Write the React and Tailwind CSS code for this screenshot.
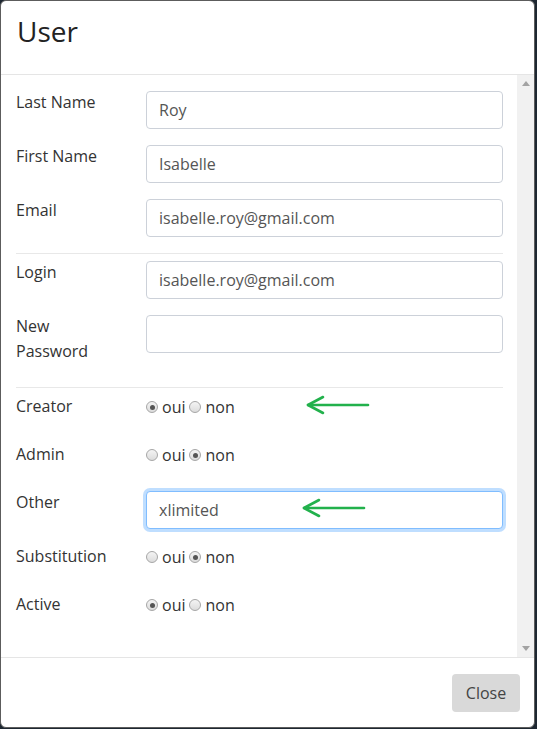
import React from "react";

function Radio({ checked }) {
  return (
    <span className="relative inline-flex w-[12px] h-[12px] rounded-full border border-[#a6a6a6] bg-gradient-to-b from-[#f4f4f4] to-[#dcdcdc] items-center justify-center">
      {checked && <span className="w-[5px] h-[5px] rounded-full bg-[#555]" />}
    </span>
  );
}

function RadioGroup({ value }) {
  return (
    <div className="h-[32px] flex items-start">
      <div className="h-[24px] flex items-center gap-[4px] text-[#333]">
        <span className="inline-flex items-center gap-[4px]">
          <Radio checked={value === "oui"} />
          <span>oui</span>
        </span>
        <span className="inline-flex items-center gap-[4px]">
          <Radio checked={value === "non"} />
          <span>non</span>
        </span>
      </div>
    </div>
  );
}

function Row({ label, children }) {
  return (
    <div className="grid grid-cols-[130px_1fr] mb-4">
      <div className="relative -top-[1px] leading-[25px] mb-[6px] text-[#333]">{label}</div>
      <div>{children}</div>
    </div>
  );
}

function Input({ value, focused }) {
  return (
    <div
      className={
        "h-[38px] rounded-[4px] border px-3 flex items-center text-[#555] bg-white " +
        (focused
          ? "border-[#80bdff] shadow-[0_0_0_3px_rgba(0,123,255,0.25)]"
          : "border-[#ccd1d9]")
      }
    >
      {value}
    </div>
  );
}

function Arrow({ className }) {
  return (
    <svg className={className} width="64" height="22" viewBox="0 0 64 22" fill="none">
      <path d="M2 10 H62" stroke="#22b14c" strokeWidth="2.6" strokeLinecap="round" />
      <path d="M17 2 L2 10 L17 18" stroke="#22b14c" strokeWidth="2.6" strokeLinecap="round" strokeLinejoin="round" />
    </svg>
  );
}

export default function App() {
  return (
    <div
      className="w-[537px] h-[729px] bg-[#1d2731] overflow-hidden text-[16px]"
      style={{ fontFamily: '"Open Sans", "Liberation Sans", sans-serif' }}
    >
      <div className="relative w-[535px] h-[728px] bg-white border border-[#5c5c5c] rounded-[6px] flex flex-col overflow-hidden">
        <div className="h-[74px] border-b border-[#e5e5e5] px-4 pt-[16px] flex items-start shrink-0">
          <h4 className="text-[28px] text-[#222] leading-none">User</h4>
        </div>
        <div className="flex-1 flex min-h-0">
          <div className="flex-1 pl-[15px] pr-[14px] pt-4">
            <Row label="Last Name"><Input value="Roy" /></Row>
            <Row label="First Name"><Input value="Isabelle" /></Row>
            <Row label="Email"><Input value="isabelle.roy@gmail.com" /></Row>
            <div className="h-px bg-[#e8e8e8] mb-[7px]" />
            <Row label="Login"><Input value="isabelle.roy@gmail.com" /></Row>
            <Row label={<>New<br />Password</>}><Input value="" /></Row>
            <div className="h-px bg-[#e8e8e8] mb-[7px]" />
            <Row label="Creator"><RadioGroup value="oui" /></Row>
            <Row label="Admin"><RadioGroup value="non" /></Row>
            <Row label="Other"><Input value="xlimited" focused /></Row>
            <Row label="Substitution"><RadioGroup value="non" /></Row>
            <Row label="Active"><RadioGroup value="oui" /></Row>
          </div>
          <div className="w-[17px] bg-[#f1f1f1] flex flex-col justify-between items-center py-[6px]">
            <svg width="8" height="5" viewBox="0 0 8 5"><path d="M0 5 L4 0 L8 5 Z" fill="#a3a3a3" /></svg>
            <svg width="8" height="5" viewBox="0 0 8 5"><path d="M0 0 L4 5 L8 0 Z" fill="#a3a3a3" /></svg>
          </div>
        </div>
        <div className="h-[70px] border-t border-[#e5e5e5] flex justify-end items-start pt-4 pr-[14px] shrink-0">
          <button className="h-[38px] w-[68px] rounded-[4px] bg-[#d9d9d9] text-[#444] text-[16px]">Close</button>
        </div>
        <Arrow className="absolute left-[305px] top-[394px]" />
        <Arrow className="absolute left-[301px] top-[497px]" />
      </div>
    </div>
  );
}
